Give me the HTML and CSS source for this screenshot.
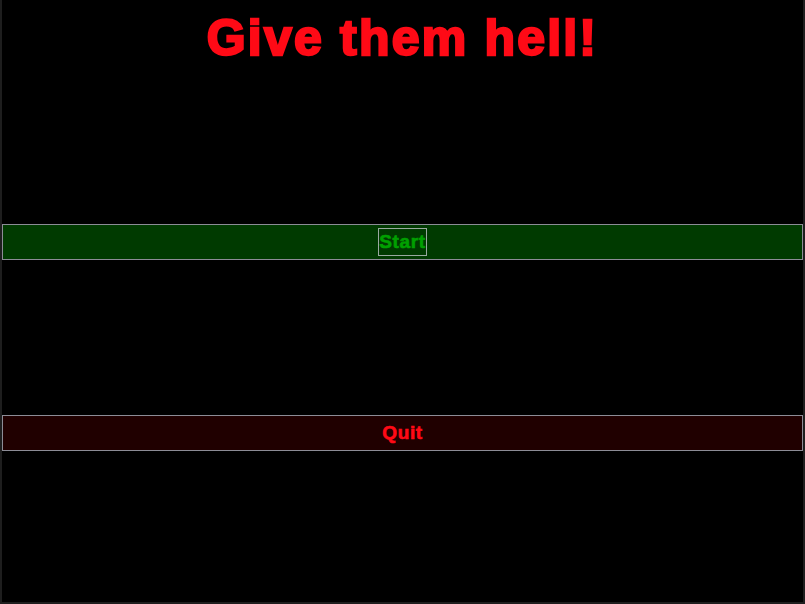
FILE: index.html
```html
<!DOCTYPE html>
<html>
<head>
<meta charset="utf-8">
<link rel="stylesheet" href="styles.css">
</head>
<body>
<div class="screen">
  <h1 class="title">Give them hell!</h1>
  <div class="menu">
    <button class="bar bar-start"><span class="label label-focus">Start</span></button>
    <button class="bar bar-quit"><span class="label">Quit</span></button>
  </div>
</div>
</body>
</html>
```
FILE: styles.css
```css
html, body {
  margin: 0;
  padding: 0;
  background: #000;
}
.screen {
  box-sizing: border-box;
  width: 805px;
  height: 604px;
  background: #000;
  border-left: 2px solid #1e1e1e;
  border-right: 2px solid #1e1e1e;
  border-bottom: 2px solid #1e1e1e;
  display: flex;
  flex-direction: column;
  overflow: hidden;
}
.title {
  margin: 11px 0 0 0;
  text-align: center;
  font-family: "Liberation Sans", Arial, sans-serif;
  font-weight: bold;
  font-size: 50px;
  line-height: 54px;
  color: #ff0a16;
  -webkit-text-stroke: 2.4px #ff0a16;
  letter-spacing: 2.2px;
}
.menu {
  display: flex;
  flex-direction: column;
  gap: 155px;
  margin-top: 159px;
}
.bar {
  box-sizing: border-box;
  width: 100%;
  height: 36px;
  margin: 0;
  padding: 0;
  border: 1px solid #8c8c96;
  display: flex;
  align-items: center;
  justify-content: center;
  font-family: "Liberation Sans", Arial, sans-serif;
  font-weight: bold;
  font-size: 19px;
}
.bar-start {
  background: #003a00;
  color: #00a000;
  -webkit-text-stroke: 0.6px #00a000;
}
.bar-quit {
  background: #200000;
  color: #ff0a16;
  -webkit-text-stroke: 0.6px #ff0a16;
}
.label {
  display: inline-block;
  padding: 3px 0;
  border: 1px solid transparent;
  line-height: 20px;
  letter-spacing: 0.6px;
}
.label-focus {
  border-color: #9aa8a0;
}
```
